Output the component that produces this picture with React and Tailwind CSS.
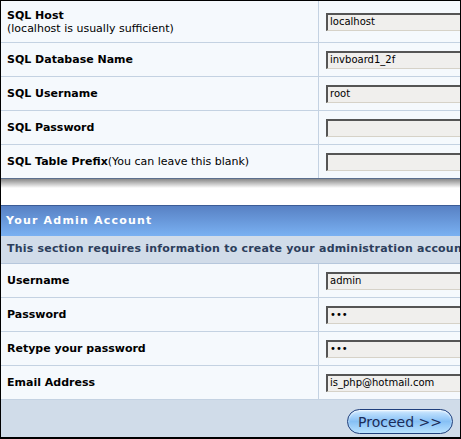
import React from "react";

const font = { fontFamily: '"DejaVu Sans", Verdana, sans-serif' };

const sqlRows = [
  { label: "SQL Host", note: "(localhost is usually sufficient)", value: "localhost", tall: true },
  { label: "SQL Database Name", value: "invboard1_2f" },
  { label: "SQL Username", value: "root" },
  { label: "SQL Password", value: "" },
  { label: "SQL Table Prefix", inline: "(You can leave this blank)", value: "" },
];

const adminRows = [
  { label: "Username", value: "admin" },
  { label: "Password", value: "•••" },
  { label: "Retype your password", value: "•••" },
  { label: "Email Address", value: "is_php@hotmail.com" },
];

function Field({ value }) {
  return (
    <div className="w-[170px] h-[18px] bg-[#f0efed] border-t-2 border-l-2 border-b border-r border-t-[#555] border-l-[#555] border-b-[#d6d2c8] border-r-[#d6d2c8] pl-[2px] text-[10px] leading-[14px] text-black whitespace-nowrap">
      {value}
    </div>
  );
}

function Row({ row, last }) {
  return (
    <div
      className={`flex bg-[#f5f9fd] ${row.tall ? "h-[42px]" : last ? "h-[33px]" : "h-[34px]"} ${
        last ? "" : "border-b border-[#c4d2e2]"
      }`}
    >
      <div className="w-[318px] shrink-0 flex flex-col justify-center pl-[6px] text-[11px] leading-[13px] text-black border-r border-[#c4d2e2]">
        <div className="whitespace-nowrap">
          <span className="font-bold">{row.label}</span>
          {row.inline && <span>{row.inline}</span>}
        </div>
        {row.note && <div className="whitespace-nowrap">{row.note}</div>}
      </div>
      <div className="flex items-center pl-[7px]">
        <Field value={row.value} />
      </div>
    </div>
  );
}

export default function App() {
  return (
    <div
      className="w-[461px] h-[439px] overflow-hidden border-t border-l border-r border-b-2 border-black bg-white"
      style={font}
    >
      <div className="w-[600px]">
        <div>
          {sqlRows.map((r, i) => (
            <Row key={r.label} row={r} last={i === sqlRows.length - 1} />
          ))}
        </div>
        <div className="h-px bg-[#5b6f8e]" />
        <div className="h-[9px] bg-gradient-to-b from-[#8a8a8a] to-white" />
        <div className="h-[17px] bg-white" />

        <div className="h-[31px] border-t border-[#3c5c96] bg-gradient-to-b from-[#5881c4] to-[#7ab1f2] flex items-center pl-[5px] text-[11px] font-bold tracking-[1.2px] text-white whitespace-nowrap">
          Your Admin Account
        </div>
        <div className="h-[28px] bg-[#d1dce9] border-b border-[#b6c7dc] flex items-center pl-[6px] text-[11px] font-bold tracking-[0.2px] text-[#2c3e5c] whitespace-nowrap">
          This section requires information to create your administration account
        </div>
        <div>
          {adminRows.map((r) => (
            <Row key={r.label} row={r} last={false} />
          ))}
        </div>
        <div className="h-[38px] bg-[#d0dce9] flex items-start">
          <div className="w-[346px] shrink-0" />
          <button className="mt-[9px] w-[106px] h-[25px] rounded-full border border-[#1f3f7c] bg-gradient-to-b from-[#cfe9ff] via-[#86c0f5] to-[#b9e2ff] text-[14px] leading-[22px] text-[#1c2c58] shadow-[inset_0_1px_2px_rgba(255,255,255,0.9)]">
            Proceed &gt;&gt;
          </button>
        </div>
      </div>
    </div>
  );
}
